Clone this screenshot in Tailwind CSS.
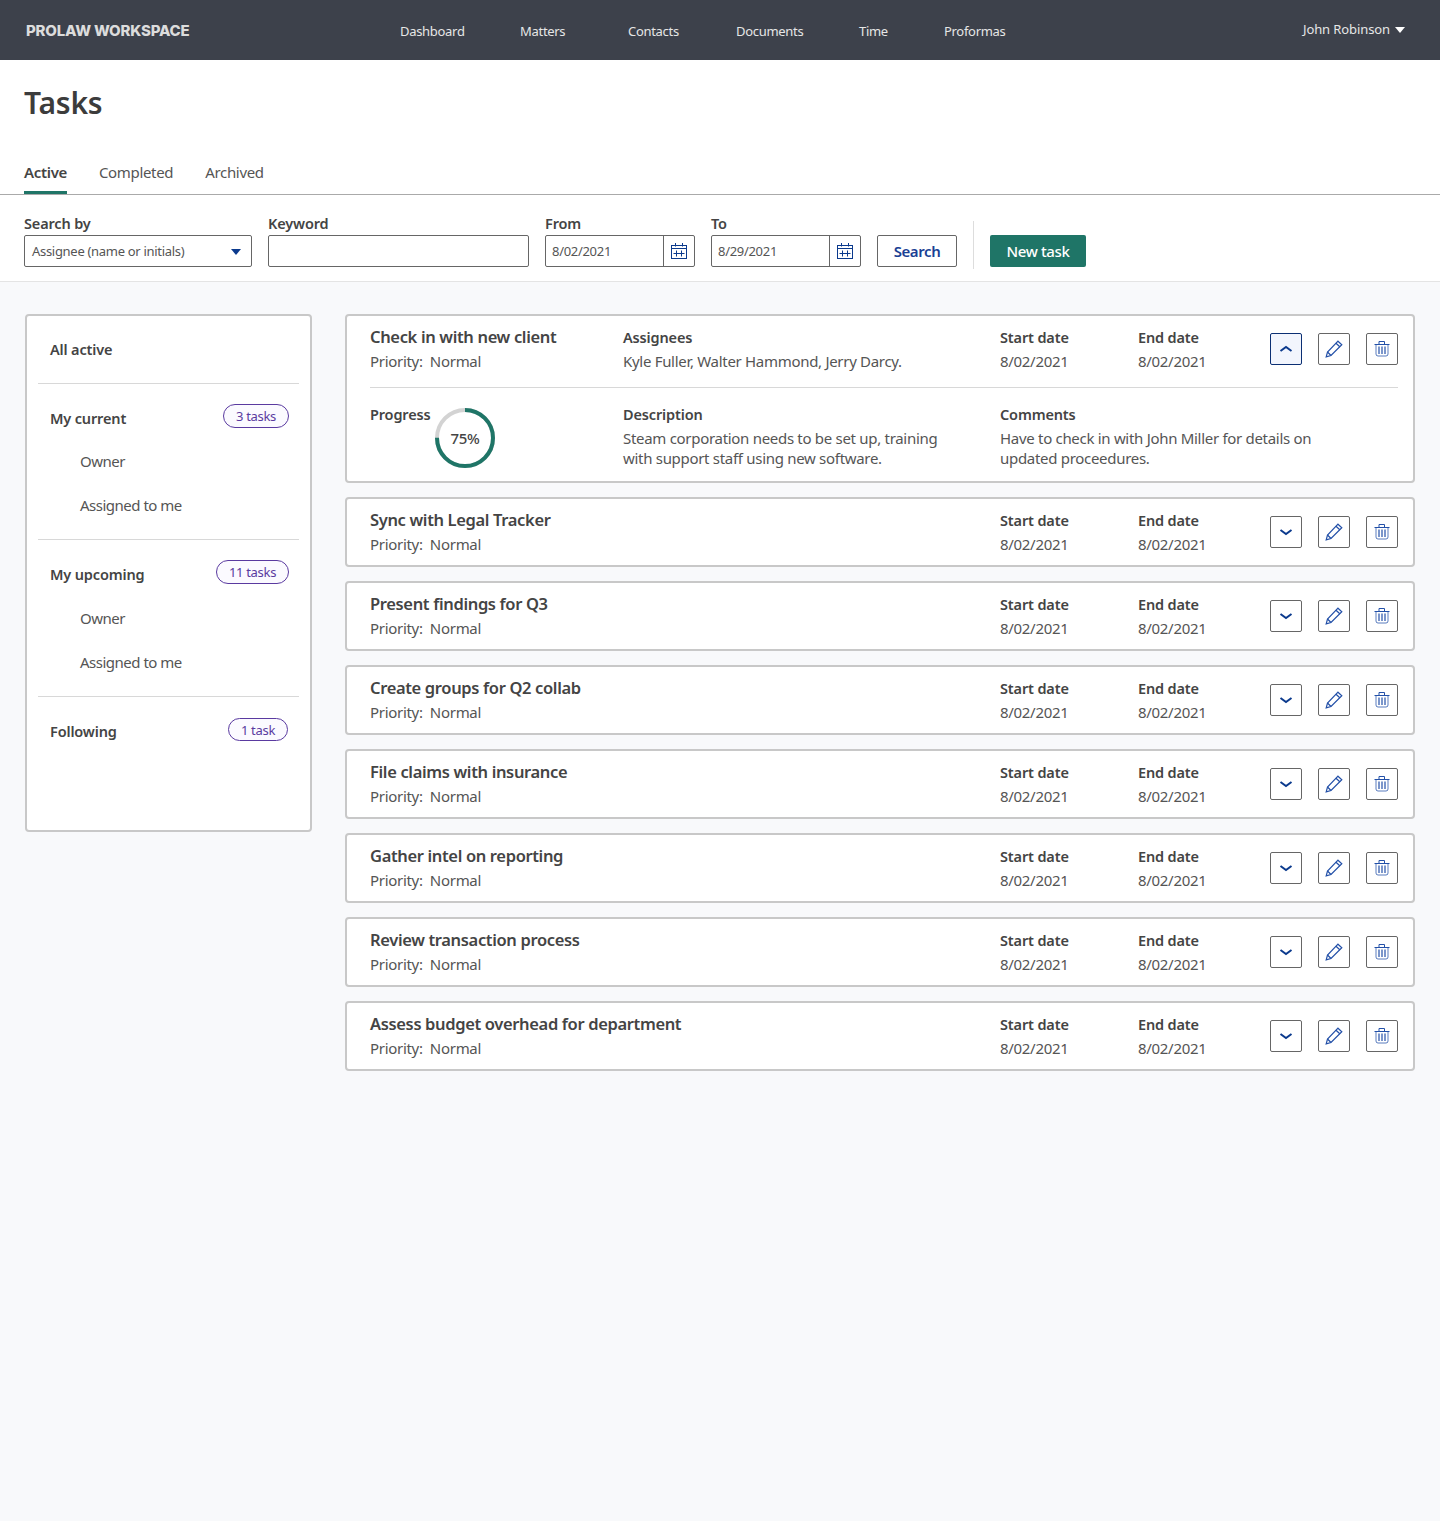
<!DOCTYPE html>
<html lang="en">
<head>
  <meta charset="UTF-8" />
  <title>Tasks - ProLaw Workspace</title>
  <script src="https://cdn.jsdelivr.net/npm/@tailwindcss/browser@4"></script>
</head>
<body class="bg-[#f8f9fb] min-h-screen font-['Noto_Sans',sans-serif] text-[#555]">

  <!-- icons -->
  <svg class="hidden">
    <symbol id="cal" viewBox="0 0 16 16"><g fill="none" stroke="currentColor" stroke-width="1"><rect x=".5" y="2.500" width="15" height="13"/><path d="M4.500 0v3.500M11.500 0v3.500M.5 5.500h15M2.500 10.500h11M5.500 7.500v6M10.500 7.500v6"/></g></symbol>
    <symbol id="up" viewBox="0 0 16 16"><path d="M2.500 10 8 6l5.500 4" fill="none" stroke="currentColor" stroke-width="2"/></symbol>
    <symbol id="down" viewBox="0 0 16 16"><path d="M2.500 6 8 10l5.500-4" fill="none" stroke="currentColor" stroke-width="2"/></symbol>
    <symbol id="pen" viewBox="0 0 18 18"><g fill="none" stroke="currentColor" stroke-width="1.200"><path d="M13 1.200 16.800 4.800 6 15.500l-4.800 1.300L2.500 12z"/><path d="M11 3.200l3.800 3.600M2.500 12 6 15.500"/></g></symbol>
    <symbol id="trash" viewBox="0 0 16 16"><g fill="none" stroke="currentColor" stroke-width="1"><path d="M.5 3.500h15M5 3.500V.5h5.500v3"/><path d="M2 3.500v9.500q0 2 2 2h8q2 0 2-2V3.500" stroke-opacity=".75"/></g><path d="M4 5.500h2V13H4zM7 5.500h2V13H7zM10 5.500h2V13h-2z" fill="currentColor" fill-opacity=".6"/></symbol>
  </svg>

  <!-- top bar -->
  <header class="h-[60px] bg-[#3d414b] flex items-center text-[13px] tracking-[-0.3px] text-[#e6e6e6]">
    <div class="w-[400px] pl-[26px] pt-[2px] font-['Inter',sans-serif] font-extrabold text-[15px] tracking-[-0.2px] text-[#dcdcdc]">PROLAW WORKSPACE</div>
    <nav class="flex pt-[4px]">
      <a class="w-[120px]">Dashboard</a>
      <a class="w-[108px]">Matters</a>
      <a class="w-[108px]">Contacts</a>
      <a class="w-[123px]">Documents</a>
      <a class="w-[85px]">Time</a>
      <a>Proformas</a>
    </nav>
    <div class="ml-auto pr-[35px] flex items-center gap-[5px] tracking-[-0.1px]">
      John Robinson
      <svg width="10" height="6" viewBox="0 0 10 6" class="text-white"><path d="M0 0h10L5 6z" fill="currentColor"/></svg>
    </div>
  </header>

  <!-- title + tabs + filters -->
  <section class="bg-white border-b border-[#e4e4e4]">
    <h1 class="pl-[24px] pt-[22px] text-[30px] leading-[42px] font-semibold tracking-[-0.2px] text-[#3c3c3c]">Tasks</h1>
    <div class="mt-[36px] px-[24px] flex gap-[32px] border-b border-[#aaa] text-[15px] leading-[24px] tracking-[-0.33px]">
      <a class="pb-[7px] border-b-[3px] border-[#1f7567] font-semibold text-[#444]">Active</a>
      <a class="pb-[7px]">Completed</a>
      <a class="pb-[7px]">Archived</a>
    </div>
    <div class="px-[24px] pt-[18px] pb-[14px] flex gap-[16px] items-end">
      <label class="w-[228px]">
        <span class="block mb-[2px] text-[14.5px] leading-[20px] font-semibold tracking-[-0.15px] text-[#444]">Search by</span>
        <span class="h-[32px] pl-[7px] pr-[10px] pt-px flex items-center justify-between border border-[#666] rounded-[2px] bg-white text-[13px] tracking-[-0.3px]">
          Assignee (name or initials)
          <svg width="10" height="6" viewBox="0 0 10 6" class="text-[#0b3a8d]"><path d="M0 0h10L5 6z" fill="currentColor"/></svg>
        </span>
      </label>
      <label class="w-[261px]">
        <span class="block mb-[2px] text-[14.5px] leading-[20px] font-semibold tracking-[-0.15px] text-[#444]">Keyword</span>
        <span class="block h-[32px] border border-[#666] rounded-[2px] bg-white"></span>
      </label>
      <label class="w-[150px]">
        <span class="block mb-[2px] text-[14.5px] leading-[20px] font-semibold tracking-[-0.15px] text-[#444]">From</span>
        <span class="h-[32px] flex border border-[#666] rounded-[2px] bg-white text-[13px] tracking-[-0.3px]">
          <span class="w-[118px] pl-[6px] pt-px flex items-center border-r border-[#666]">8/02/2021</span>
          <span class="flex-1 flex items-center justify-center text-[#0b3a8d]"><svg width="16" height="16"><use href="#cal"/></svg></span>
        </span>
      </label>
      <label class="w-[150px]">
        <span class="block mb-[2px] text-[14.5px] leading-[20px] font-semibold tracking-[-0.15px] text-[#444]">To</span>
        <span class="h-[32px] flex border border-[#666] rounded-[2px] bg-white text-[13px] tracking-[-0.3px]">
          <span class="w-[118px] pl-[6px] pt-px flex items-center border-r border-[#666]">8/29/2021</span>
          <span class="flex-1 flex items-center justify-center text-[#0b3a8d]"><svg width="16" height="16"><use href="#cal"/></svg></span>
        </span>
      </label>
      <button class="w-[80px] h-[32px] border border-[#666] rounded-[2px] bg-white text-[15px] font-semibold tracking-[-0.4px] text-[#1a3f94]">Search</button>
      <div class="w-px h-[48px] -mb-[2px] bg-[#ddd]"></div>
      <button class="w-[96px] h-[32px] rounded-[2px] bg-[#1f7567] text-[15px] font-medium tracking-[-0.35px] text-white">New task</button>
    </div>
  </section>

  <main class="px-[25px] pt-[32px] flex gap-[33px] items-start">
    <!-- sidebar -->
    <aside class="w-[287px] h-[518px] shrink-0 bg-white border-2 border-[#c8c8c8] rounded-[4px] px-[11px] text-[15px] leading-[24px] tracking-[-0.5px]">
      <div class="px-[12px] pt-[21px] pb-[22px] border-b border-[#d8d8d8] text-[14.5px] font-semibold tracking-[-0.15px] text-[#444]">All active</div>
      <div class="pt-[22px] pb-[22px] pl-[12px] pr-[10px] border-b border-[#d8d8d8]">
        <div class="flex justify-between items-start text-[14.5px] font-semibold tracking-[-0.15px] text-[#444]">My current
          <span class="-mt-[2px] w-[66px] h-[24px] flex items-center justify-center border border-[#5a3aa0] rounded-full bg-[#fbfaff] text-[13px] font-normal tracking-[-0.3px] text-[#5a3aa0]">3 tasks</span>
        </div>
        <div class="mt-[19px] pl-[30px]">Owner</div>
        <div class="mt-[20px] pl-[30px]">Assigned to me</div>
      </div>
      <div class="pt-[22px] pb-[22px] pl-[12px] pr-[10px] border-b border-[#d8d8d8]">
        <div class="flex justify-between items-start text-[14.5px] font-semibold tracking-[-0.15px] text-[#444]">My upcoming
          <span class="-mt-[2px] w-[73px] h-[24px] flex items-center justify-center border border-[#5a3aa0] rounded-full bg-[#fbfaff] text-[13px] font-normal tracking-[-0.3px] text-[#5a3aa0]">11 tasks</span>
        </div>
        <div class="mt-[20px] pl-[30px]">Owner</div>
        <div class="mt-[20px] pl-[30px]">Assigned to me</div>
      </div>
      <div class="pt-[22px] pl-[12px] pr-[11px]">
        <div class="flex justify-between items-start text-[14.5px] font-semibold tracking-[-0.15px] text-[#444]">Following
          <span class="-mt-px w-[60px] h-[23px] flex items-center justify-center border border-[#5a3aa0] rounded-full bg-[#fbfaff] text-[13px] font-normal tracking-[-0.3px] text-[#5a3aa0]">1 task</span>
        </div>
      </div>
    </aside>

    <!-- task cards -->
    <div class="flex-1 flex flex-col gap-[14px] text-[15px] leading-[24px] tracking-[-0.3px]">
      <article class="h-[169px] bg-white border-2 border-[#c8c8c8] rounded-[4px] pl-[23px] pr-[15px] pt-[9px]">
        <div class="grid grid-cols-[253px_377px_138px_132px_128px] pb-[14px] border-b border-[#d8d8d8]">
          <div><h2 class="text-[16.5px] font-semibold tracking-[-0.35px] text-[#444]">Check in with new client</h2><p>Priority:&nbsp; Normal</p></div>
          <div><div class="text-[14.5px] font-semibold tracking-[-0.15px] text-[#444]">Assignees</div><p>Kyle Fuller, Walter Hammond, Jerry Darcy.</p></div>
          <div><div class="text-[14.5px] font-semibold tracking-[-0.15px] text-[#444]">Start date</div><p>8/02/2021</p></div>
          <div><div class="text-[14.5px] font-semibold tracking-[-0.15px] text-[#444]">End date</div><p>8/02/2021</p></div>
          <div class="mt-[8px] flex gap-[16px]">
            <button class="size-[32px] flex items-center justify-center border border-[#0b2f73] rounded-[2px] bg-[#f2f5fd] text-[#0b3a8d]"><svg width="16" height="16"><use href="#up"/></svg></button>
            <button class="size-[32px] flex items-center justify-center border border-[#666] rounded-[2px] text-[#2350a8]"><svg width="18" height="18"><use href="#pen"/></svg></button>
            <button class="size-[32px] flex items-center justify-center border border-[#666] rounded-[2px] text-[#2350a8]"><svg width="16" height="16"><use href="#trash"/></svg></button>
          </div>
        </div>
        <div class="grid grid-cols-[253px_377px_1fr] pt-[14px]">
          <div class="flex"><span class="text-[14.5px] font-semibold tracking-[-0.15px] text-[#444] w-[65px]">Progress</span>
            <div class="relative size-[60px] mt-[6px]">
              <svg width="60" height="60" viewBox="0 0 60 60"><circle cx="30" cy="30" r="28" fill="none" stroke="#d3d3d3" stroke-width="4"/><circle cx="30" cy="30" r="28" fill="none" stroke="#1f7567" stroke-width="4" stroke-dasharray="131.900 175.900" transform="rotate(-90 30 30)"/></svg>
              <span class="absolute inset-0 flex items-center justify-center text-[15px] font-medium text-[#444]">75%</span>
            </div>
          </div>
          <div><div class="text-[14.5px] font-semibold tracking-[-0.15px] text-[#444] mb-[2px]">Description</div><p class="leading-[20px]">Steam corporation needs to be set up, training<br>with support staff using new software.</p></div>
          <div><div class="text-[14.5px] font-semibold tracking-[-0.15px] text-[#444] mb-[2px]">Comments</div><p class="leading-[20px]">Have to check in with John Miller for details on<br>updated proceedures.</p></div>
        </div>
      </article>

      <article class="h-[70px] bg-white border-2 border-[#c8c8c8] rounded-[4px] pl-[23px] pr-[15px] pt-[9px] grid grid-cols-[630px_138px_132px_128px]">
        <div><h2 class="text-[16.5px] font-semibold tracking-[-0.35px] text-[#444]">Sync with Legal Tracker</h2><p>Priority:&nbsp; Normal</p></div>
        <div><div class="text-[14.5px] font-semibold tracking-[-0.15px] text-[#444]">Start date</div><p>8/02/2021</p></div>
        <div><div class="text-[14.5px] font-semibold tracking-[-0.15px] text-[#444]">End date</div><p>8/02/2021</p></div>
        <div class="mt-[8px] flex gap-[16px]">
          <button class="size-[32px] flex items-center justify-center border border-[#666] rounded-[2px] text-[#0b3a8d]"><svg width="16" height="16"><use href="#down"/></svg></button>
          <button class="size-[32px] flex items-center justify-center border border-[#666] rounded-[2px] text-[#2350a8]"><svg width="18" height="18"><use href="#pen"/></svg></button>
          <button class="size-[32px] flex items-center justify-center border border-[#666] rounded-[2px] text-[#2350a8]"><svg width="16" height="16"><use href="#trash"/></svg></button>
        </div>
      </article>
      <article class="h-[70px] bg-white border-2 border-[#c8c8c8] rounded-[4px] pl-[23px] pr-[15px] pt-[9px] grid grid-cols-[630px_138px_132px_128px]">
        <div><h2 class="text-[16.5px] font-semibold tracking-[-0.35px] text-[#444]">Present findings for Q3</h2><p>Priority:&nbsp; Normal</p></div>
        <div><div class="text-[14.5px] font-semibold tracking-[-0.15px] text-[#444]">Start date</div><p>8/02/2021</p></div>
        <div><div class="text-[14.5px] font-semibold tracking-[-0.15px] text-[#444]">End date</div><p>8/02/2021</p></div>
        <div class="mt-[8px] flex gap-[16px]">
          <button class="size-[32px] flex items-center justify-center border border-[#666] rounded-[2px] text-[#0b3a8d]"><svg width="16" height="16"><use href="#down"/></svg></button>
          <button class="size-[32px] flex items-center justify-center border border-[#666] rounded-[2px] text-[#2350a8]"><svg width="18" height="18"><use href="#pen"/></svg></button>
          <button class="size-[32px] flex items-center justify-center border border-[#666] rounded-[2px] text-[#2350a8]"><svg width="16" height="16"><use href="#trash"/></svg></button>
        </div>
      </article>
      <article class="h-[70px] bg-white border-2 border-[#c8c8c8] rounded-[4px] pl-[23px] pr-[15px] pt-[9px] grid grid-cols-[630px_138px_132px_128px]">
        <div><h2 class="text-[16.5px] font-semibold tracking-[-0.35px] text-[#444]">Create groups for Q2 collab</h2><p>Priority:&nbsp; Normal</p></div>
        <div><div class="text-[14.5px] font-semibold tracking-[-0.15px] text-[#444]">Start date</div><p>8/02/2021</p></div>
        <div><div class="text-[14.5px] font-semibold tracking-[-0.15px] text-[#444]">End date</div><p>8/02/2021</p></div>
        <div class="mt-[8px] flex gap-[16px]">
          <button class="size-[32px] flex items-center justify-center border border-[#666] rounded-[2px] text-[#0b3a8d]"><svg width="16" height="16"><use href="#down"/></svg></button>
          <button class="size-[32px] flex items-center justify-center border border-[#666] rounded-[2px] text-[#2350a8]"><svg width="18" height="18"><use href="#pen"/></svg></button>
          <button class="size-[32px] flex items-center justify-center border border-[#666] rounded-[2px] text-[#2350a8]"><svg width="16" height="16"><use href="#trash"/></svg></button>
        </div>
      </article>
      <article class="h-[70px] bg-white border-2 border-[#c8c8c8] rounded-[4px] pl-[23px] pr-[15px] pt-[9px] grid grid-cols-[630px_138px_132px_128px]">
        <div><h2 class="text-[16.5px] font-semibold tracking-[-0.35px] text-[#444]">File claims with insurance</h2><p>Priority:&nbsp; Normal</p></div>
        <div><div class="text-[14.5px] font-semibold tracking-[-0.15px] text-[#444]">Start date</div><p>8/02/2021</p></div>
        <div><div class="text-[14.5px] font-semibold tracking-[-0.15px] text-[#444]">End date</div><p>8/02/2021</p></div>
        <div class="mt-[8px] flex gap-[16px]">
          <button class="size-[32px] flex items-center justify-center border border-[#666] rounded-[2px] text-[#0b3a8d]"><svg width="16" height="16"><use href="#down"/></svg></button>
          <button class="size-[32px] flex items-center justify-center border border-[#666] rounded-[2px] text-[#2350a8]"><svg width="18" height="18"><use href="#pen"/></svg></button>
          <button class="size-[32px] flex items-center justify-center border border-[#666] rounded-[2px] text-[#2350a8]"><svg width="16" height="16"><use href="#trash"/></svg></button>
        </div>
      </article>
      <article class="h-[70px] bg-white border-2 border-[#c8c8c8] rounded-[4px] pl-[23px] pr-[15px] pt-[9px] grid grid-cols-[630px_138px_132px_128px]">
        <div><h2 class="text-[16.5px] font-semibold tracking-[-0.35px] text-[#444]">Gather intel on reporting</h2><p>Priority:&nbsp; Normal</p></div>
        <div><div class="text-[14.5px] font-semibold tracking-[-0.15px] text-[#444]">Start date</div><p>8/02/2021</p></div>
        <div><div class="text-[14.5px] font-semibold tracking-[-0.15px] text-[#444]">End date</div><p>8/02/2021</p></div>
        <div class="mt-[8px] flex gap-[16px]">
          <button class="size-[32px] flex items-center justify-center border border-[#666] rounded-[2px] text-[#0b3a8d]"><svg width="16" height="16"><use href="#down"/></svg></button>
          <button class="size-[32px] flex items-center justify-center border border-[#666] rounded-[2px] text-[#2350a8]"><svg width="18" height="18"><use href="#pen"/></svg></button>
          <button class="size-[32px] flex items-center justify-center border border-[#666] rounded-[2px] text-[#2350a8]"><svg width="16" height="16"><use href="#trash"/></svg></button>
        </div>
      </article>
      <article class="h-[70px] bg-white border-2 border-[#c8c8c8] rounded-[4px] pl-[23px] pr-[15px] pt-[9px] grid grid-cols-[630px_138px_132px_128px]">
        <div><h2 class="text-[16.5px] font-semibold tracking-[-0.35px] text-[#444]">Review transaction process</h2><p>Priority:&nbsp; Normal</p></div>
        <div><div class="text-[14.5px] font-semibold tracking-[-0.15px] text-[#444]">Start date</div><p>8/02/2021</p></div>
        <div><div class="text-[14.5px] font-semibold tracking-[-0.15px] text-[#444]">End date</div><p>8/02/2021</p></div>
        <div class="mt-[8px] flex gap-[16px]">
          <button class="size-[32px] flex items-center justify-center border border-[#666] rounded-[2px] text-[#0b3a8d]"><svg width="16" height="16"><use href="#down"/></svg></button>
          <button class="size-[32px] flex items-center justify-center border border-[#666] rounded-[2px] text-[#2350a8]"><svg width="18" height="18"><use href="#pen"/></svg></button>
          <button class="size-[32px] flex items-center justify-center border border-[#666] rounded-[2px] text-[#2350a8]"><svg width="16" height="16"><use href="#trash"/></svg></button>
        </div>
      </article>
      <article class="h-[70px] bg-white border-2 border-[#c8c8c8] rounded-[4px] pl-[23px] pr-[15px] pt-[9px] grid grid-cols-[630px_138px_132px_128px]">
        <div><h2 class="text-[16.5px] font-semibold tracking-[-0.35px] text-[#444]">Assess budget overhead for department</h2><p>Priority:&nbsp; Normal</p></div>
        <div><div class="text-[14.5px] font-semibold tracking-[-0.15px] text-[#444]">Start date</div><p>8/02/2021</p></div>
        <div><div class="text-[14.5px] font-semibold tracking-[-0.15px] text-[#444]">End date</div><p>8/02/2021</p></div>
        <div class="mt-[8px] flex gap-[16px]">
          <button class="size-[32px] flex items-center justify-center border border-[#666] rounded-[2px] text-[#0b3a8d]"><svg width="16" height="16"><use href="#down"/></svg></button>
          <button class="size-[32px] flex items-center justify-center border border-[#666] rounded-[2px] text-[#2350a8]"><svg width="18" height="18"><use href="#pen"/></svg></button>
          <button class="size-[32px] flex items-center justify-center border border-[#666] rounded-[2px] text-[#2350a8]"><svg width="16" height="16"><use href="#trash"/></svg></button>
        </div>
      </article>
    </div>
  </main>
</body>
</html>
